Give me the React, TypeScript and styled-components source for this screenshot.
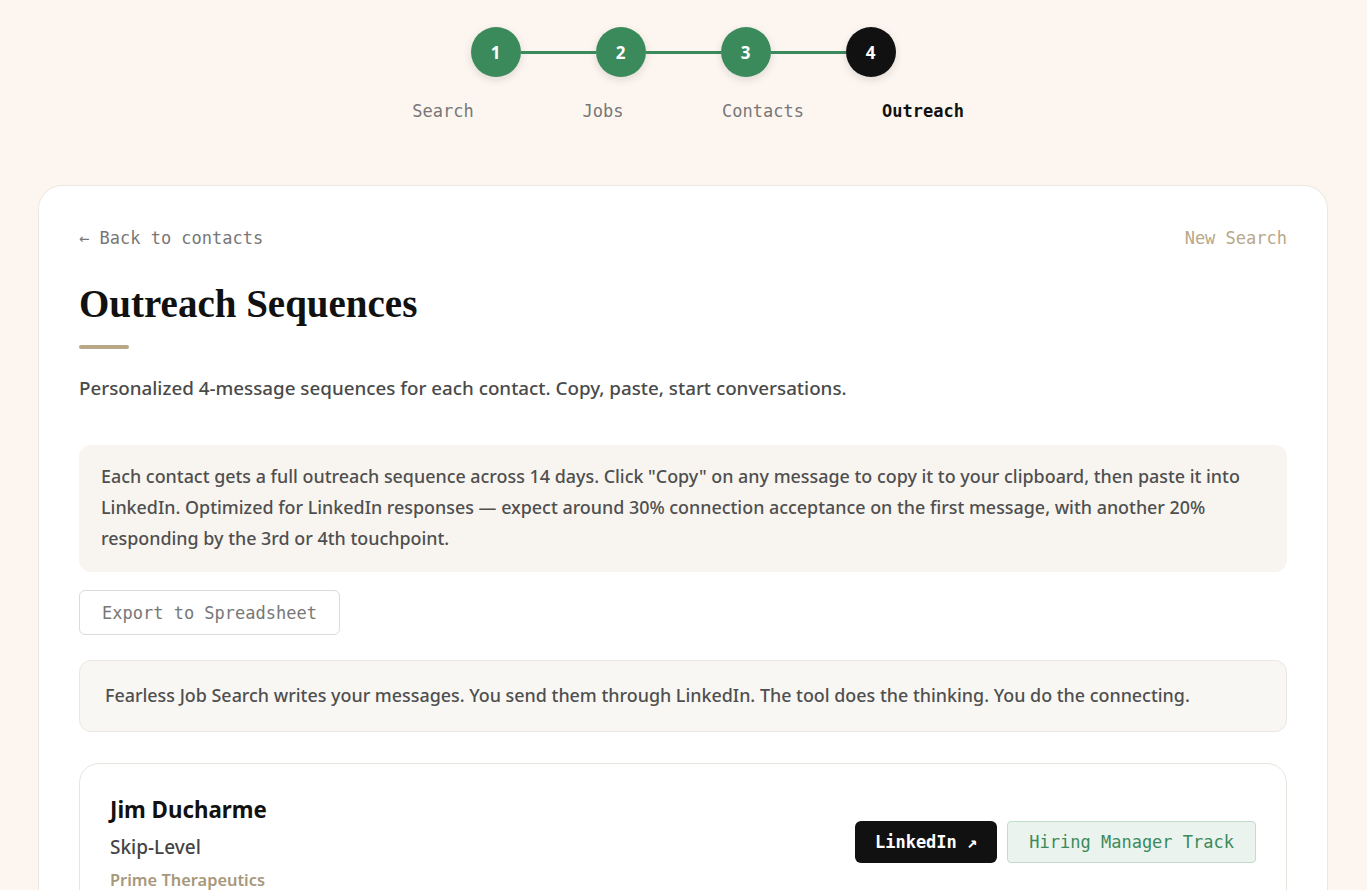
import React from "react";
import styled, { createGlobalStyle } from "styled-components";

const Global = createGlobalStyle`
  html, body { margin: 0; padding: 0; background: #fdf6f0; }
  body { font-family: "Noto Sans", "Open Sans", sans-serif; color: #222; }
  * { box-sizing: border-box; }
`;

const MONO = `"DejaVu Sans Mono", "Liberation Mono", monospace`;
const SANS = `"Noto Sans", "Open Sans", sans-serif`;

const Page = styled.div`
  min-height: 890px;
  padding: 27px 39px 0 38px;
  display: flex;
  flex-direction: column;
  align-items: center;
`;

const Stepper = styled.div`
  display: flex;
  flex-direction: column;
  align-items: center;
  gap: 22px;
  margin-bottom: 62px;
`;

const DotRow = styled.div`
  display: flex;
  align-items: center;
`;

const Dot = styled.div<{ $active?: boolean }>`
  width: 50px;
  height: 50px;
  border-radius: 50%;
  background: ${(p) => (p.$active ? "#111111" : "#3b8a5c")};
  color: #fff;
  display: flex;
  align-items: center;
  justify-content: center;
  font-family: ${SANS};
  font-weight: 700;
  font-size: 17px;
  box-shadow: 0 3px 8px rgba(0, 0, 0, 0.12);
`;

const Connector = styled.div`
  width: 75px;
  height: 3px;
  background: #3b8a5c;
`;

const LabelRow = styled.div`
  display: grid;
  grid-template-columns: repeat(4, 160px);
`;

const StepLabel = styled.div<{ $active?: boolean }>`
  text-align: center;
  font-family: ${MONO};
  font-size: 17px;
  line-height: 24px;
  font-weight: ${(p) => (p.$active ? 700 : 500)};
  color: ${(p) => (p.$active ? "#111" : "#777")};
`;

const Card = styled.div`
  width: 1290px;
  background: #fff;
  border: 1px solid #efe7df;
  border-bottom: none;
  border-radius: 24px 24px 0 0;
  padding: 40px 40px 40px 40px;
  display: flex;
  flex-direction: column;
`;

const TopBar = styled.div`
  display: flex;
  justify-content: space-between;
  align-items: center;
  font-family: ${MONO};
  font-size: 17px;
  line-height: 24px;
  margin-bottom: 29px;
`;

const BackLink = styled.a`
  color: #777;
  text-decoration: none;
  cursor: pointer;
`;

const NewSearch = styled.a`
  color: #b8a78a;
  text-decoration: none;
  cursor: pointer;
`;

const Title = styled.h1`
  margin: 0;
  font-family: "Liberation Serif", "DejaVu Serif", serif;
  font-weight: 700;
  font-size: 39px;
  line-height: 50px;
  color: #111;
`;

const Rule = styled.div`
  width: 50px;
  height: 4px;
  border-radius: 2px;
  background: #b9a888;
  margin: 16px 0 25px;
`;

const Subtitle = styled.p`
  margin: 0 0 43px;
  font-family: ${SANS};
  font-size: 18.8px;
  line-height: 28px;
  color: #4a4a4a;
  font-weight: 500;
`;

const InfoBox = styled.div`
  background: #f8f5f0;
  border-radius: 12px;
  padding: 16px 22px 18px;
  font-family: ${SANS};
  font-size: 17.9px;
  line-height: 31px;
  color: #4f4f4f;
  font-weight: 500;
  margin-bottom: 18px;
`;

const ExportButton = styled.button`
  align-self: flex-start;
  height: 45px;
  padding: 0 22px;
  background: #fff;
  border: 1px solid #dedad5;
  border-radius: 6px;
  font-family: ${MONO};
  font-size: 17px;
  color: #777;
  cursor: pointer;
  margin-bottom: 25px;
`;

const Notice = styled.div`
  background: #f9f7f4;
  border: 1px solid #ebe6df;
  border-radius: 12px;
  padding: 21px 25px 22px;
  font-family: ${SANS};
  font-size: 17.9px;
  line-height: 27px;
  color: #4f4f4f;
  font-weight: 500;
  margin-bottom: 31px;
`;

const ContactCard = styled.div`
  border: 1px solid #e8e4de;
  border-radius: 20px;
  background: #fff;
  padding: 31px 30px 20px;
  display: flex;
  justify-content: space-between;
  align-items: flex-start;
`;

const ContactInfo = styled.div`
  display: flex;
  flex-direction: column;
`;

const Name = styled.div`
  font-family: ${SANS};
  font-size: 22.3px;
  line-height: 30px;
  font-weight: 700;
  color: #111;
  margin-bottom: 8px;
`;

const Role = styled.div`
  font-family: ${SANS};
  font-size: 19px;
  line-height: 28px;
  font-weight: 500;
  color: #444;
  margin-bottom: 7px;
`;

const Company = styled.div`
  font-family: ${SANS};
  font-size: 16.4px;
  line-height: 24px;
  font-weight: 600;
  color: #a8987a;
`;

const Actions = styled.div`
  display: flex;
  gap: 10px;
  margin-top: 26px;
`;

const LinkedInButton = styled.a`
  height: 42px;
  padding: 0 20px;
  display: inline-flex;
  align-items: center;
  background: #111;
  color: #fff;
  border-radius: 6px;
  font-family: ${MONO};
  font-weight: 700;
  font-size: 17px;
  text-decoration: none;
  cursor: pointer;
`;

const TrackBadge = styled.span`
  height: 42px;
  padding: 0 21px;
  display: inline-flex;
  align-items: center;
  background: #eaf3ed;
  border: 1px solid #c2dccb;
  border-radius: 4px;
  color: #3b8a5c;
  font-family: ${MONO};
  font-weight: 500;
  font-size: 17px;
`;

const steps = ["Search", "Jobs", "Contacts", "Outreach"];

export default function App() {
  return (
    <>
      <Global />
      <Page>
        <Stepper>
          <DotRow>
            {steps.map((s, i) => (
              <React.Fragment key={s}>
                {i > 0 && <Connector />}
                <Dot $active={i === 3}>{i + 1}</Dot>
              </React.Fragment>
            ))}
          </DotRow>
          <LabelRow>
            {steps.map((s, i) => (
              <StepLabel key={s} $active={i === 3}>
                {s}
              </StepLabel>
            ))}
          </LabelRow>
        </Stepper>
        <Card>
          <TopBar>
            <BackLink>← Back to contacts</BackLink>
            <NewSearch>New Search</NewSearch>
          </TopBar>
          <Title>Outreach Sequences</Title>
          <Rule />
          <Subtitle>
            Personalized 4-message sequences for each contact. Copy, paste, start conversations.
          </Subtitle>
          <InfoBox>
            Each contact gets a full outreach sequence across 14 days. Click "Copy" on any message to copy it to your
            clipboard, then paste it into LinkedIn. Optimized for LinkedIn responses — expect around 30% connection
            acceptance on the first message, with another 20% responding by the 3rd or 4th touchpoint.
          </InfoBox>
          <ExportButton>Export to Spreadsheet</ExportButton>
          <Notice>
            Fearless Job Search writes your messages. You send them through LinkedIn. The tool does the thinking. You do
            the connecting.
          </Notice>
          <ContactCard>
            <ContactInfo>
              <Name>Jim Ducharme</Name>
              <Role>Skip-Level</Role>
              <Company>Prime Therapeutics</Company>
            </ContactInfo>
            <Actions>
              <LinkedInButton>LinkedIn ↗</LinkedInButton>
              <TrackBadge>Hiring Manager Track</TrackBadge>
            </Actions>
          </ContactCard>
        </Card>
      </Page>
    </>
  );
}
